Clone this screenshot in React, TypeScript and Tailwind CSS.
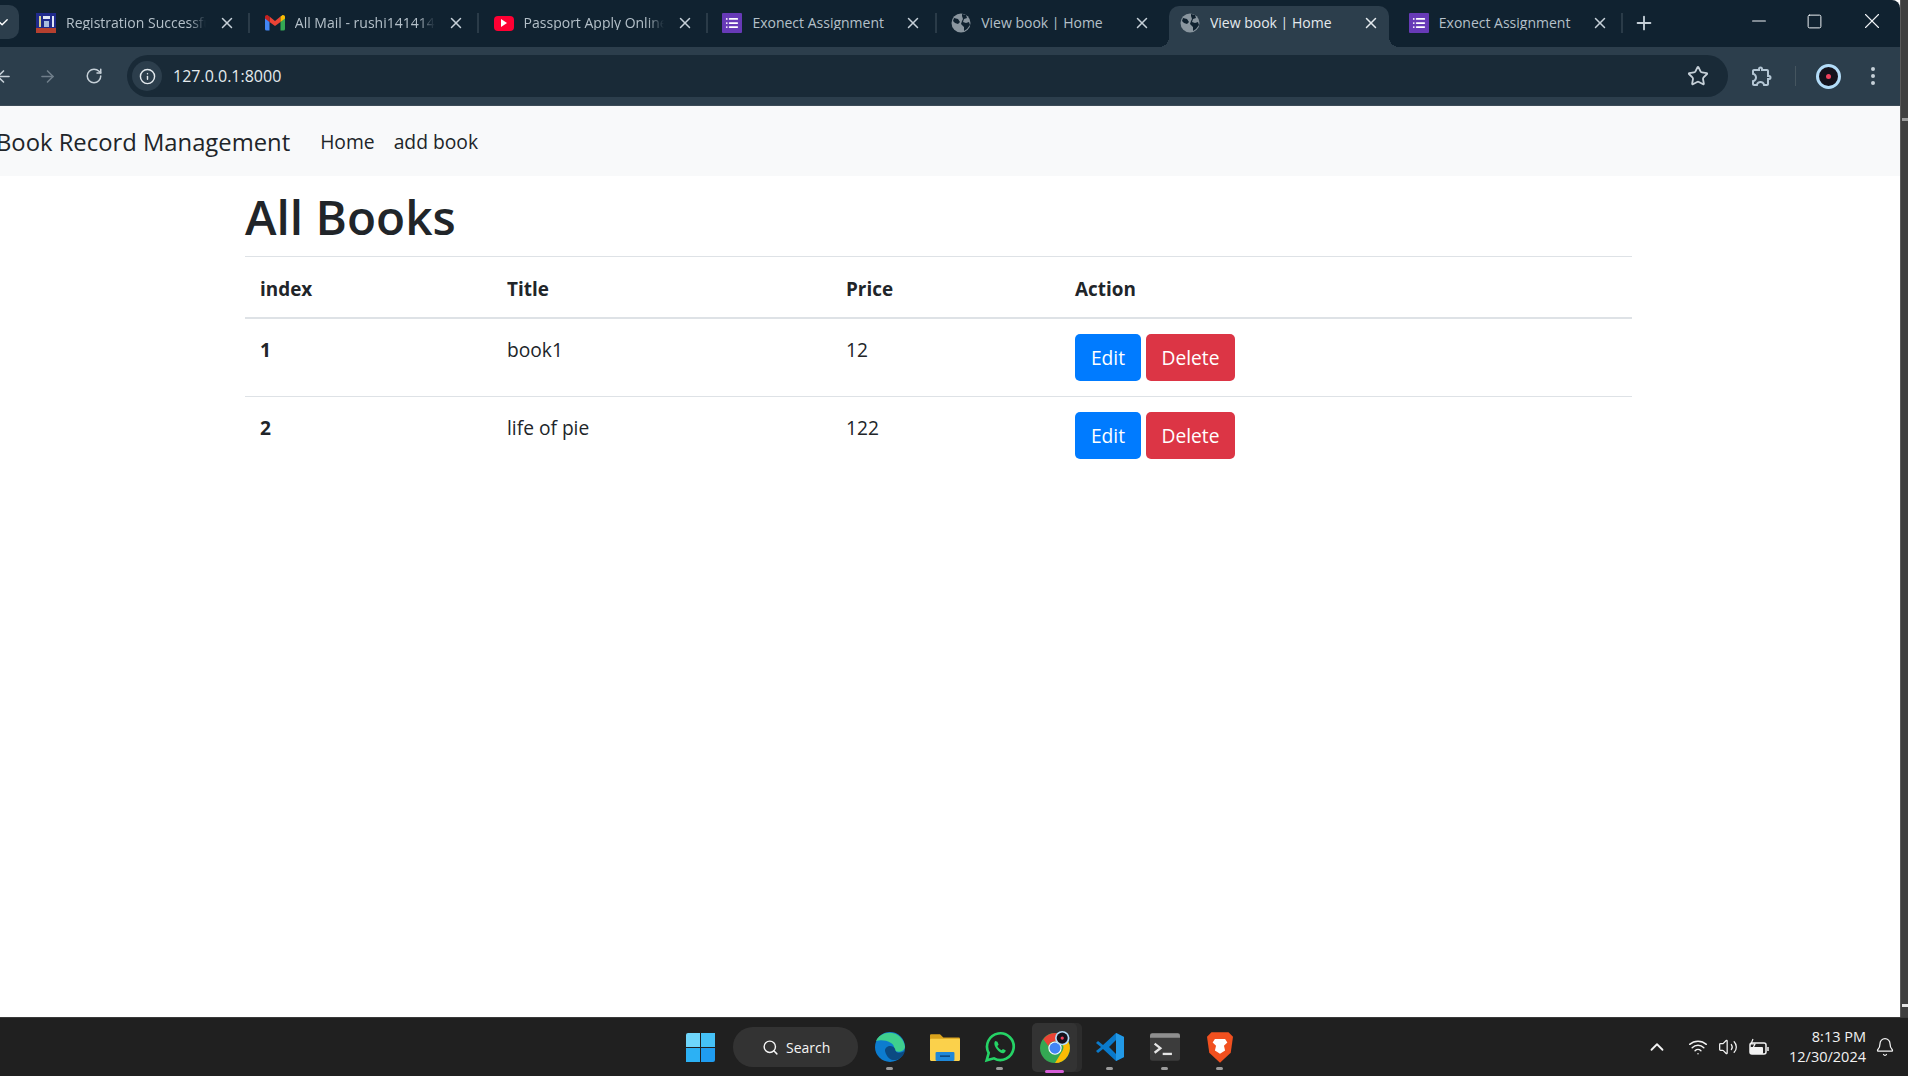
import React from 'react';
import { ArrowLeft, ArrowRight, RotateCw, Info, Star, MoreVertical, X, Plus, Minus, Square, Search, ChevronUp, Wifi, Volume2, Bell, Check, List } from 'lucide-react';
import { MdOutlineExtension } from 'react-icons/md';

const FormsIcon = () => (
  <span className="w-[20px] h-[20px] bg-[#673ab7] flex items-center justify-center shrink-0 rounded-[1px]">
    <List size={14} strokeWidth={3} className="text-white" />
  </span>
);

const GlobeIcon = () => (
  <svg width="20" height="20" viewBox="0 0 20 20" className="shrink-0">
    <circle cx="10" cy="10" r="9.5" fill="#8a969f" />
    <path d="M3 5l4 1 2 3-2 2-3-1-2-2zM11 1l4 1 1 3-3 1-1 3 3 1 3-1 1 3-3 4-3 2 0-4-3-3 1-3 1-2-1-3z" fill="#102230" />
  </svg>
);

const MailIcon = () => (
  <svg width="20" height="16" viewBox="0 0 20 16" className="shrink-0">
    <path d="M0 2v12a1.500 1.500 0 0 0 1.500 1.500H4.500V7z" fill="#4285f4" />
    <path d="M20 2v12a1.500 1.500 0 0 1-1.500 1.500H15.500V7z" fill="#34a853" />
    <path d="M4.500 7L10 11l5.500-4V1.500L10 6 4.500 1.500z" fill="#ea4335" />
    <path d="M15.500 1.500V7L20 3.500V2c0-1.600-2-2.400-3-1.500z" fill="#fbbc04" />
    <path d="M4.500 1.500V7L0 3.500V2C0 .4 2-.4 3 .5z" fill="#c5221f" />
  </svg>
);

const YoutubeIcon = () => (
  <span className="w-[20px] h-[15px] bg-[#ff0033] rounded-[4px] flex items-center justify-center shrink-0">
    <span className="w-0 h-0 border-y-[4px] border-y-transparent border-l-[6px] border-l-white" />
  </span>
);

const RegIcon = () => (
  <svg width="20" height="20" viewBox="0 0 20 20" className="shrink-0">
    <rect width="20" height="20" fill="#1f2a8c" />
    <rect y="15" width="20" height="5" fill="#b5402f" />
    <rect x="3" y="3" width="2" height="11" fill="#d8cf8a" />
    <rect x="7" y="3" width="7" height="3" fill="#dfe6f5" />
    <rect x="8" y="8" width="5" height="6" fill="#a9bde0" />
    <rect x="16" y="3" width="2" height="11" fill="#dfe6f5" />
  </svg>
);

const tabs = [
  { title: 'Registration Successful', icon: <RegIcon />, fade: true, sep: true },
  { title: 'All Mail - rushi141414', icon: <MailIcon />, fade: true, sep: true },
  { title: 'Passport Apply Online', icon: <YoutubeIcon />, fade: true, sep: true },
  { title: 'Exonect Assignment', icon: <FormsIcon />, sep: true },
  { title: 'View book | Home', icon: <GlobeIcon /> },
  { title: 'View book | Home', icon: <GlobeIcon />, active: true },
  { title: 'Exonect Assignment', icon: <FormsIcon />, sep: true },
];

const Tab = ({ title, icon, active, fade, sep }: { title: string; icon: React.ReactNode; active?: boolean; fade?: boolean; sep?: boolean }) => (
  <div className="flex items-end shrink-0">
    <div className={`relative w-[220px] h-[41px] flex items-center pl-[11px] pb-[7px] rounded-t-[10px] ${active ? 'bg-[#2c3e4c]' : ''}`}>
      {active && <span className="absolute left-[-10px] bottom-0 w-[10px] h-[10px] bg-[radial-gradient(circle_at_0_0,transparent_10px,#2c3e4c_10px)]" />}
      {active && <span className="absolute right-[-10px] bottom-0 w-[10px] h-[10px] bg-[radial-gradient(circle_at_100%_0,transparent_10px,#2c3e4c_10px)]" />}
      {icon}
      <span className={`ml-[10px] w-[140px] text-[14px] leading-none whitespace-nowrap overflow-hidden ${fade ? '[mask-image:linear-gradient(to_right,black_88%,transparent)]' : ''} ${active ? 'text-[#e4eaee]' : 'text-[#b4c0c9]'}`}>{title}</span>
      <X size={18} strokeWidth={2} className={`ml-[12px] shrink-0 ${active ? 'text-[#e4eaee]' : 'text-[#c6d0d8]'}`} />
    </div>
    <div className="w-[8.8px] h-[41px] pb-[7px] flex items-center justify-center">
      {sep && <span className="w-[2px] h-[20px] bg-[#2a3b48]" />}
    </div>
  </div>
);

const rows = [
  { index: 1, title: 'book1', price: 12 },
  { index: 2, title: 'life of pie', price: 122 },
];

const Browser = () => (
  <div className="flex flex-col shrink-0">
    <div className="h-[47px] bg-[#102230] flex items-end overflow-hidden rounded-tr-[8px]">
      <div className="w-[19px] h-[34px] mb-[8px] rounded-r-[10px] bg-[#2c3e4c] flex items-center shrink-0">
        <Check size={11} strokeWidth={3} className="text-white -ml-[2px]" />
      </div>
      <div className="flex items-end ml-[6px]">
        {tabs.map((t, i) => (
          <Tab key={i} {...t} />
        ))}
      </div>
      <Plus size={22} strokeWidth={2} className="text-[#c6d0d8] ml-[6px] mb-[13px] shrink-0" />
      <div className="ml-auto flex items-center mb-[13px] text-[#eef2f5] shrink-0">
        <Minus size={22} strokeWidth={1.1} className="mr-[36px]" />
        <Square size={17} strokeWidth={1.4} className="mr-[36px]" />
        <X size={26} strokeWidth={1} className="mr-[15px]" />
      </div>
    </div>
    <div className="h-[59px] bg-[#2c3e4c] flex items-center border-b border-[#3c4b57]">
      <ArrowLeft size={19} className="text-[#c6d0d8] -ml-[6px] shrink-0" />
      <ArrowRight size={19} className="text-[#6f7e8a] ml-[25px] shrink-0" />
      <RotateCw size={18} className="text-[#c6d0d8] ml-[28px] shrink-0" />
      <div className="ml-[24px] w-[1601px] h-[42px] rounded-full bg-[#192a37] flex items-center pl-[5px] shrink-0">
        <span className="w-[30px] h-[30px] rounded-full bg-[#2c3e4c] flex items-center justify-center">
          <Info size={17} className="text-[#e4eaee]" />
        </span>
        <span className="ml-[11px] text-[16px] text-[#e4eaee]">127.0.0.1:8000</span>
        <Star size={22} strokeWidth={2} className="ml-auto mr-[19px] text-[#c6d0d8]" />
      </div>
      <MdOutlineExtension size={24} className="ml-[22px] text-[#b4c6d4] shrink-0" />
      <span className="ml-[21px] w-px h-[20px] bg-[#45555f] shrink-0" />
      <span className="ml-[20px] w-[25px] h-[25px] rounded-full border-[3px] border-[#b3dcf8] bg-[#14121c] flex items-center justify-center shrink-0">
        <span className="w-[5px] h-[5px] rounded-full bg-[#f0405c]" />
      </span>
      <MoreVertical size={24} className="ml-[20px] text-[#c6d0d8] shrink-0" />
    </div>
  </div>
);

const Page = () => (
  <div className="flex-1 min-h-0 bg-white overflow-hidden">
    <nav className="h-[70px] pt-[3px] bg-[#f8f9fa] flex items-center text-[#212529] whitespace-nowrap">
      <span className="text-[23.8px] -ml-[4px]">Book Record Management</span>
      <a className="text-[19.3px] ml-[30px]">Home</a>
      <a className="text-[19.3px] ml-[19px]">add book</a>
    </nav>
    <div className="ml-[245px] w-[1387px] text-[#212529]">
      <h1 className="text-[47.7px] leading-[60px] font-semibold mt-[11px] mb-[9px]">All Books</h1>
      <table className="w-full text-[19.2px] table-fixed border-collapse">
        <thead>
          <tr className="border-y border-[#dee2e6] text-[18.9px]">
            <th className="w-[247px] pl-[15px] pt-[4px] h-[61px] text-left font-bold">index</th>
            <th className="w-[339px] pl-[15px] pt-[4px] text-left font-bold">Title</th>
            <th className="w-[229px] pl-[15px] pt-[4px] text-left font-bold">Price</th>
            <th className="pl-[15px] pt-[4px] text-left font-bold">Action</th>
          </tr>
        </thead>
        <tbody>
          {rows.map((r) => (
            <tr key={r.index} className="border-b border-[#dee2e6] first:border-t-2 first:border-t-[#dee2e6] last:border-b-0">
              <td className="pl-[15px] pt-[16px] align-top font-bold leading-[30px]">{r.index}</td>
              <td className="pl-[15px] pt-[16px] align-top leading-[30px]">{r.title}</td>
              <td className="pl-[15px] pt-[16px] align-top leading-[30px]">{r.price}</td>
              <td className="pl-[15px] py-[15px]">
                <div className="flex gap-[5px]">
                  <button className="w-[66px] h-[47px] pt-[2px] rounded-[5px] bg-[#007bff] text-white">Edit</button>
                  <button className="w-[89px] h-[47px] pt-[2px] rounded-[5px] bg-[#dc3545] text-white">Delete</button>
                </div>
              </td>
            </tr>
          ))}
        </tbody>
      </table>
    </div>
  </div>
);

const Dot = () => <span className="absolute bottom-[7px] left-[24px] w-[7px] h-[3px] rounded bg-[#9a9a9a]" />;

const AppIcons = () => (
  <div className="flex items-center ml-[4px]">
    <div className="w-[55px] h-[59px] flex items-center justify-center relative">
      <svg width="30" height="30" viewBox="0 0 27 27">
        <circle cx="13.500" cy="13.500" r="13.500" fill="#0c7ccf" />
        <path d="M1 8C5 -2 24 -3 27 13c0 5-8 6-10 3 2-6-8-10-16-8z" fill="#3fcf8e" />
        <path d="M9 17c0-5 7-6 9-2 1 6 6 3 9 2-3 10-15 12-18 0z" fill="#0b4a82" />
      </svg>
      <Dot />
    </div>
    <div className="w-[55px] h-[59px] flex items-center justify-center">
      <svg width="30" height="28" viewBox="0 0 27 25">
        <path d="M0 2a1 1 0 0 1 1-1h8l3 3h14a1 1 0 0 1 1 1v19H0z" fill="#d9a21c" />
        <rect y="5" width="27" height="20" rx="1" fill="#fbd14b" />
        <rect x="5" y="17" width="17" height="8" rx="1" fill="#1e88d9" />
        <rect x="9" y="20" width="9" height="1.500" fill="#0b4a82" />
      </svg>
    </div>
    <div className="w-[55px] h-[59px] flex items-center justify-center relative">
      <svg width="32" height="32" viewBox="0 0 24 24" fill="none">
        <path d="M2 22l1.500-5.500A10 10 0 1 1 7.500 20.500z" stroke="#25d366" strokeWidth="2" />
        <path d="M8.500 7.500c-1 1-1.200 3 1 6s4.500 3.500 5.500 3 1.500-1.500 1.200-2l-2-1-1 1c-1.200-.4-2.800-2-3.200-3.200l1-1-.9-2.200z" fill="#25d366" />
      </svg>
      <Dot />
    </div>
    <div className="w-[55px] h-[59px] flex items-center justify-center relative">
      <div className="w-[45px] h-[49px] rounded-[5px] bg-[#333333] flex items-center justify-center shadow-[5px_0_0_#2c2c2c]">
        <svg width="30" height="34" viewBox="0 0 27 30">
          <circle cx="13.500" cy="16" r="13.500" fill="#34a853" />
          <path d="M13.500 2.500a13.500 13.500 0 0 1 12 7.500h-12a6 6 0 0 0-6 4L3 8a13.500 13.500 0 0 1 10.500-5.500z" fill="#ea4335" />
          <path d="M25.500 10a13.500 13.500 0 0 1-12 19.500l6-10a6 6 0 0 0-1-9z" fill="#fbbc04" />
          <circle cx="13.500" cy="16" r="6" fill="#fff" />
          <circle cx="13.500" cy="16" r="5" fill="#4285f4" />
          <circle cx="20" cy="7" r="6.500" fill="#b3dcf8" />
          <circle cx="20" cy="7" r="5" fill="#14121c" />
          <circle cx="20" cy="7" r="1.500" fill="#f0405c" />
        </svg>
      </div>
      <span className="absolute bottom-[4px] left-[18px] w-[19px] h-[3px] rounded bg-[#d65ed8]" />
    </div>
    <div className="w-[55px] h-[59px] flex items-center justify-center relative">
      <svg width="30" height="30" viewBox="0 0 28 30">
        <path d="M20 1l8 4v20l-8 4L7 17l-5 4-2-2 5-4-5-4 2-2 5 4z" fill="#0a7acb" />
        <path d="M20 8l-7 7 7 7z" fill="#202020" />
        <path d="M20 1l8 4v20l-8 4z" fill="#2299e6" />
      </svg>
      <Dot />
    </div>
    <div className="w-[55px] h-[59px] flex items-center justify-center relative">
      <svg width="30" height="28" viewBox="0 0 26 24">
        <rect width="26" height="24" rx="2" fill="#3c3c3c" />
        <path d="M0 2a2 2 0 0 1 2-2h22a2 2 0 0 1 2 2v2H0z" fill="#8f8f8f" />
        <path d="M4 9l5 4-5 4" stroke="#e5e5e5" strokeWidth="2" fill="none" />
        <rect x="11" y="17" width="8" height="2" fill="#e5e5e5" />
      </svg>
      <Dot />
    </div>
    <div className="w-[55px] h-[59px] flex items-center justify-center relative">
      <svg width="26" height="32" viewBox="0 0 23 28">
        <path d="M4 1h15l4 4-2 14-9.500 9L2 19 0 5z" fill="#f1501f" />
        <path d="M7 7h9l2 3-3 3 1 4-4.500 3L7 17l1-4-3-3z" fill="#fff" />
      </svg>
      <Dot />
    </div>
  </div>
);

const Taskbar = () => (
  <div className="h-[59px] bg-[#202020] border-t border-[#3a3a3a] flex items-center shrink-0">
    <div className="ml-[686px] flex items-center shrink-0">
      <div className="w-[29px] h-[29px] grid grid-cols-2 gap-[1px]">
        <span className="bg-[#6fd6fb] rounded-tl-[2px]" />
        <span className="bg-[#45c1f7]" />
        <span className="bg-[#2cb1f4]" />
        <span className="bg-[#1f9cf0] rounded-br-[2px]" />
      </div>
      <div className="ml-[18px] w-[125px] h-[40px] rounded-full bg-[#333333] flex items-center pl-[29px] text-[#f5f5f5]">
        <Search size={17} strokeWidth={2} />
        <span className="ml-[7px] text-[14px]">Search</span>
      </div>
      <AppIcons />
    </div>
    <div className="ml-auto flex items-center text-[#f2f2f2] shrink-0">
      <ChevronUp size={22} strokeWidth={2} />
      <Wifi size={20} strokeWidth={1.75} className="ml-[20px]" />
      <Volume2 size={20} strokeWidth={1.5} className="ml-[10px]" />
      <svg width="21" height="18" viewBox="0 0 21 18" className="ml-[10px]" fill="none" stroke="currentColor" strokeWidth="1.500">
        <rect x="2" y="5" width="16" height="11" rx="2" />
        <rect x="2" y="9" width="13" height="7" rx="1" fill="#f2f2f2" stroke="none" />
        <path d="M20 9v4" />
        <path d="M5 1L3 6h4l-2 4" strokeWidth="1.200" />
      </svg>
      <div className="ml-[20px] text-[14.5px] leading-[20px] text-right">
        <div>8:13 PM</div>
        <div>12/30/2024</div>
      </div>
      <Bell size={20} strokeWidth={1.5} className="ml-[9px] mr-[13px]" />
    </div>
  </div>
);

export default function App() {
  return (
    <div className="w-[1908px] h-[1076px] overflow-hidden flex flex-col [font-family:'Open_Sans',sans-serif]">
      <div className="flex flex-1 min-h-0">
        <div className="w-[1901px] flex flex-col min-h-0">
          <Browser />
          <Page />
        </div>
        <div className="flex-1 bg-[#3f3f3f] border-l border-[#5a5a5a] flex flex-col justify-between pt-[118px] pb-[10px]">
          <span className="w-[6px] h-[3px] bg-[#9a9a9a] ml-[1px]" />
          <span className="w-[6px] h-[3px] bg-[#e5e5e5] ml-[1px]" />
        </div>
      </div>
      <Taskbar />
    </div>
  );
}
